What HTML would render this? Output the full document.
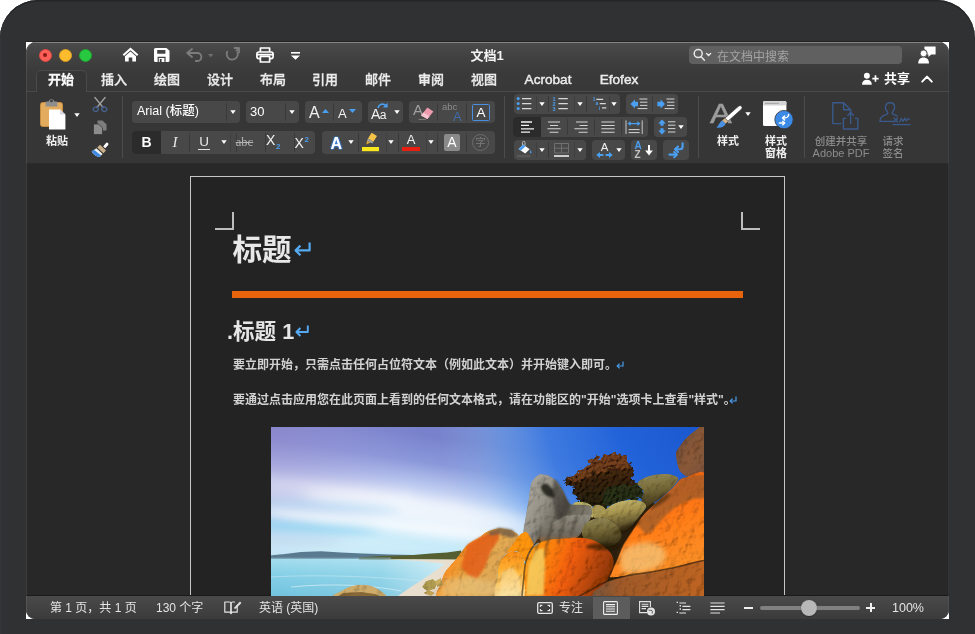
<!DOCTYPE html>
<html lang="zh-CN">
<head>
<meta charset="utf-8">
<title>文档1</title>
<style>
*{box-sizing:border-box;margin:0;padding:0}
html,body{width:975px;height:634px;overflow:hidden;background:#fff}
body{font-family:"Liberation Sans","Noto Sans CJK SC",sans-serif;color:#fff;position:relative}
.abs{position:absolute}
#bezel{position:absolute;left:0;top:0;width:975px;height:700px;background:#303133;border-radius:38px 38px 0 0;box-shadow:inset 0 1.5px 0 #242526,inset 2px 0 1px #343537}
#winbg{position:absolute;left:26px;top:42px;width:923px;height:577px;background:#fff;box-shadow:0 -1px 0 #232324}
#win{will-change:transform;position:absolute;left:26px;top:42px;width:923px;height:577px;border-radius:10px 10px 9px 9px;overflow:hidden;background:#282828}
#win:after{content:"";position:absolute;left:0;top:0;right:0;bottom:0;border-radius:10px 10px 9px 9px;box-shadow:inset 1px 0 0 rgba(255,255,255,.09),inset -1px 0 0 rgba(255,255,255,.06);pointer-events:none}
#titlebar{position:absolute;left:0;top:0;width:923px;height:49px;background:linear-gradient(#4b4b4b 0,#424242 14px,#3a3a3a 30px,#383838 49px)}
#titlebar:before{content:"";position:absolute;left:0;top:0;right:0;height:1px;background:#848484}
#ribbon{position:absolute;left:0;top:49px;width:923px;height:72px;background:#363636;border-top:1px solid #4a4a4a}
#ribbonline{position:absolute;left:0;top:121px;width:923px;height:2px;background:linear-gradient(#2c2c2c,#282828)}
#work{position:absolute;left:0;top:123px;width:923px;height:431px;background:#282828}
#status{position:absolute;left:0;top:553px;width:923px;height:24px;background:linear-gradient(#4a4a4a,#3b3b3b);border-top:1px solid #1a1a1a}
.tl{position:absolute;top:6.5px;width:13px;height:13px;border-radius:50%}
.tab{-webkit-text-stroke:0.3px #ececec;position:absolute;top:28.5px;height:18px;line-height:18px;font-size:13px;font-weight:500;color:#ececec;text-align:center;width:60px;white-space:nowrap}
#acttab{position:absolute;left:10px;top:28px;width:51px;height:22px;background:#363636;border:1px solid #4a4a4a;border-bottom:none;border-radius:5px 5px 0 0}
.grp{position:absolute;background:#484848;border-radius:4px;height:22px}
.dv{position:absolute;top:2px;bottom:2px;width:1px;background:#3a3a3a}
.vsep{position:absolute;top:54px;width:1px;height:62px;background:#4c4c4c}
.lbl{position:absolute;font-size:10.5px;font-weight:500;color:#f0f0f0;text-align:center;white-space:nowrap;line-height:12px}
.st{position:absolute;top:558px;font-size:12px;line-height:16px;color:#e4e4e4;white-space:nowrap}
svg{position:absolute;overflow:visible}
</style>
</head>
<body>
<div id="bezel"></div>
<div id="winbg"></div>
<div id="win">
  <div id="titlebar"></div>
  <div id="ribbon"></div>
  <div id="ribbonline"></div>
  <div id="work"></div>
  <div id="status"></div>
  
  <div class="tl" style="left:12.5px;background:#fc5f57;border:0.5px solid #d94a42"></div>
  <div class="abs" style="left:17px;top:11px;width:4px;height:4px;border-radius:50%;background:#8c1a14"></div>
  <div class="tl" style="left:32.5px;background:#fdbc2e;border:0.5px solid #d99f22"></div>
  <div class="tl" style="left:52.5px;background:#28c840;border:0.5px solid #1fa631"></div>
  <!-- home -->
  <svg style="left:96px;top:5px" width="17" height="15" viewBox="0 0 17 15"><path d="M8.5 0.6 L16.4 7.6 L15 9 L8.5 3.3 L2 9 L0.6 7.6 Z" fill="#fff"/><path d="M3 9.3 L8.5 4.6 L14 9.3 V14.6 H10.3 V10.4 H6.7 V14.6 H3 Z" fill="#fff"/></svg>
  <!-- save -->
  <svg style="left:128px;top:6px" width="16" height="14" viewBox="0 0 16 14"><path d="M1.5 0 H12.5 L15.5 2.8 V12.5 A1.5 1.5 0 0 1 14 14 H1.5 A1.5 1.5 0 0 1 0 12.5 V1.5 A1.5 1.5 0 0 1 1.5 0 Z M3.2 2 V5.8 H11.4 V2 Z M3.6 8.8 V14 H11.6 V8.8 Z" fill="#fff" fill-rule="evenodd"/><rect x="4.8" y="10" width="5.6" height="4" fill="#fff"/><rect x="5.8" y="11" width="1.8" height="3" fill="#3c3c3c"/></svg>
  <!-- undo -->
  <svg style="left:159.5px;top:6px" width="17" height="14" viewBox="0 0 17 14" fill="none" stroke="#7c7c7c" stroke-width="1.8" stroke-linecap="round" stroke-linejoin="round"><path d="M6 1 L1.2 5 L6 9"/><path d="M1.6 5 H11.4 A4 4 0 0 1 11.4 13 H9.8"/></svg>
  <svg style="left:182px;top:11.5px" width="5.4" height="3.2" viewBox="0 0 7 4"><path d="M0 0 H7 L3.5 4 Z" fill="#6e6e6e"/></svg>
  <!-- redo -->
  <svg style="left:199px;top:5px" width="16" height="15" viewBox="0 0 16 15" fill="none" stroke="#7c7c7c" stroke-width="1.8" stroke-linecap="round" stroke-linejoin="round"><path d="M9.6 1 H14 V5.4"/><path d="M13.6 1.6 L11.6 3.6 M12.6 5.4 A5.6 5.6 0 1 1 2.2 4.6"/></svg>
  <!-- print -->
  <svg style="left:230px;top:5px" width="18" height="16" viewBox="0 0 18 16" fill="none" stroke="#fff" stroke-width="1.7" stroke-linejoin="round"><path d="M4.4 5 V1 H13.6 V5"/><rect x="0.9" y="5" width="16.2" height="6.6" rx="2"/><rect x="4.4" y="9.4" width="9.2" height="5.6" fill="#3e3e3e"/><path d="M0.9 7.6 H17.1" stroke-width="1.6"/></svg>
  <!-- customize -->
  <svg style="left:265px;top:10px" width="9" height="8" viewBox="0 0 9 8"><rect x="0" y="0" width="9" height="1.6" fill="#fff"/><path d="M0 3.4 H9 L4.5 7.8 Z" fill="#fff"/></svg>
  <div class="abs" style="left:421px;top:5px;width:80px;text-align:center;font-size:13px;line-height:17px;font-weight:700;color:#f4f4f4">文档1</div>
  <!-- search -->
  <div class="abs" style="left:663px;top:4px;width:213px;height:18px;border-radius:4px;background:#606060"></div>
  <svg style="left:667px;top:6px" width="20" height="14" viewBox="0 0 20 14" fill="none" stroke="#e8e8e8" stroke-width="1.5" stroke-linecap="round"><circle cx="5.2" cy="5.6" r="4"/><path d="M8.2 8.8 L11.4 12.2"/><path d="M13.6 5.6 L15.6 7.6 L17.6 5.6" stroke-width="1.4"/></svg>
  <div class="abs" style="left:691px;top:6.5px;font-size:12px;line-height:16px;color:#a4a4a4;white-space:nowrap">在文档中搜索</div>
  <!-- comments person -->
  <svg style="left:892px;top:4px" width="18" height="18" viewBox="0 0 18 18"><path d="M6.4 0.4 H17.6 V8.4 H13.2 L10.4 11 V8.4 H9.2 A4 4 0 0 0 6.4 3.2 Z" fill="#fff"/><circle cx="5.6" cy="7.4" r="3.4" fill="#fff" stroke="#3e3e3e" stroke-width="0.8"/><path d="M0.2 17.6 C0.2 13.6 2.4 11.6 5.6 11.6 C8.8 11.6 11 13.6 11 17.6 Z" fill="#fff"/></svg>
  <!-- tabs -->
  <div id="acttab"></div>
  <div class="tab" style="left:5px;font-weight:700;color:#fff">开始</div>
  <div class="tab" style="left:58px">插入</div>
  <div class="tab" style="left:111px">绘图</div>
  <div class="tab" style="left:164px">设计</div>
  <div class="tab" style="left:217px">布局</div>
  <div class="tab" style="left:269px">引用</div>
  <div class="tab" style="left:322px">邮件</div>
  <div class="tab" style="left:375px">审阅</div>
  <div class="tab" style="left:428px">视图</div>
  <div class="tab" style="left:492px;font-size:13.6px;-webkit-text-stroke:0.45px #ececec">Acrobat</div>
  <div class="tab" style="left:563px;font-size:13.6px;-webkit-text-stroke:0.45px #ececec">Efofex</div>
  <!-- share -->
  <svg style="left:836px;top:30px" width="17.5" height="13.5" viewBox="0 0 20 15"><circle cx="5.6" cy="4" r="3.4" fill="#fff"/><path d="M0 14.4 C0 10.4 2.2 8.6 5.6 8.6 C9 8.6 11.2 10.4 11.2 14.4 Z" fill="#fff"/><path d="M15.4 3.6 V11 M11.8 7.3 H19" stroke="#fff" stroke-width="1.9"/></svg>
  <div class="abs" style="left:858px;top:28px;font-size:13px;line-height:18px;font-weight:700;color:#fff;white-space:nowrap">共享</div>
  <svg style="left:895px;top:33px" width="12" height="8" viewBox="0 0 12 8" fill="none" stroke="#fff" stroke-width="2" stroke-linecap="round" stroke-linejoin="round"><path d="M1.2 6.6 L6 1.6 L10.8 6.6"/></svg>

  
  <!-- clipboard -->
  <svg style="left:14px;top:56px" width="26" height="32" viewBox="0 0 26 32"><rect x="0.5" y="4.5" width="22" height="24" rx="2.2" fill="#e2ab5e" stroke="#c58d3f" stroke-width="1"/><path d="M5.6 8.4 V4.6 Q5.6 3.6 6.6 3.6 H8.6 A3 3 0 0 1 14.4 3.6 H16.4 Q17.4 3.6 17.4 4.6 V8.4 Z" fill="#8e8e8e"/><circle cx="11.5" cy="3" r="1.3" fill="#3a3a3a"/><path d="M9 11.5 H20 L25.4 16.6 V31.4 H9 Z" fill="#fff"/><path d="M20 11.5 V16.6 H25.4 Z" fill="#d8d8e4"/></svg>
  <svg style="left:47.5px;top:70.5px" width="6" height="5" viewBox="0 0 6 5"><path d="M0.3 0.3 H5.7 L3 4 Z" fill="#fff"/></svg>
  <div class="lbl" style="left:11px;top:93px;width:40px;font-size:11px;font-weight:700">粘贴</div>
  <!-- scissors -->
  <svg style="left:66px;top:55px" width="16" height="16" viewBox="0 0 16 16" fill="none"><path d="M3 0.6 L11 10.4 M13 0.6 L5 10.4" stroke="#a4a4a4" stroke-width="1.5" stroke-linecap="round"/><ellipse cx="3.8" cy="12.2" rx="2.6" ry="2.2" stroke="#46628e" stroke-width="1.3" transform="rotate(-30 3.8 12.2)"/><ellipse cx="12.2" cy="12.2" rx="2.6" ry="2.2" stroke="#46628e" stroke-width="1.3" transform="rotate(30 12.2 12.2)"/></svg>
  <!-- copy -->
  <svg style="left:67px;top:78px" width="14" height="15" viewBox="0 0 14 15"><path d="M4.5 0.5 H9.5 L13.5 4.4 V10.5 H4.5 Z" fill="#7e7e7e"/><path d="M0.5 4 H5.6 L9.5 7.8 V14.5 H0.5 Z" fill="#8c8c8c" stroke="#363636" stroke-width="0.8"/></svg>
  <!-- format painter -->
  <svg style="left:65px;top:100px" width="18" height="16" viewBox="0 0 18 16"><path d="M12.2 4.4 L15 1 A1.5 1.5 0 0 1 17.2 3 L14.2 6.2 Z" fill="#fff"/><path d="M6.2 5.4 L9 2.8 L15 8.6 L12.4 11.2 Z" fill="#c9b08a"/><path d="M5.4 6.2 L11.6 12 L8.8 14.8 C6 15.6 2 12 0.6 9.6 Z" fill="#f2f2f2"/><path d="M3 7.8 L10.2 13.6 L8.8 14.8 C6 15.6 2 12 0.6 9.6 Z" fill="#3f8ae0"/></svg>
  <div class="vsep" style="left:96px"></div>
  <!-- font name / size -->
  <div class="grp" style="left:106px;top:59px;width:108px"><div class="dv" style="left:94px"></div></div>
  <div class="abs" style="left:111px;top:61px;font-size:12.5px;line-height:17px;font-weight:500;color:#fff;white-space:nowrap">Arial (标题)</div>
  <svg style="left:204px;top:68px" width="6" height="5" viewBox="0 0 6 5"><path d="M0.3 0.3 H5.7 L3 4 Z" fill="#fff"/></svg>
  <div class="grp" style="left:220px;top:59px;width:53px"><div class="dv" style="left:39px"></div></div>
  <div class="abs" style="left:224px;top:61px;font-size:13px;line-height:17px;font-weight:500;color:#fff">30</div>
  <svg style="left:263px;top:68px" width="6" height="5" viewBox="0 0 6 5"><path d="M0.3 0.3 H5.7 L3 4 Z" fill="#fff"/></svg>
  <!-- grow/shrink -->
  <div class="grp" style="left:279px;top:59px;width:57px"><div class="dv" style="left:28px"></div></div>
  <div class="abs" style="left:283px;top:60px;font-size:16px;line-height:22px;color:#f2f2f2">A</div>
  <svg style="left:296px;top:66.5px" width="7" height="4.4" viewBox="0 0 8 5"><path d="M0 4.6 H8 L4 0 Z" fill="#4a9ff0"/></svg>
  <div class="abs" style="left:312px;top:61px;font-size:13px;line-height:22px;color:#f2f2f2">A</div>
  <svg style="left:322.5px;top:67px" width="7" height="4.4" viewBox="0 0 8 5"><path d="M0 0 H8 L4 4.6 Z" fill="#4a9ff0"/></svg>
  <!-- change case -->
  <div class="grp" style="left:342px;top:59px;width:35px"></div>
  <div class="abs" style="left:345px;top:62px;font-size:14px;line-height:20px;color:#f2f2f2;letter-spacing:-0.6px">A<span style="font-size:12px">a</span></div>
  <svg style="left:351px;top:60px" width="11" height="7" viewBox="0 0 11 7" fill="none"><path d="M1 6 C2 2 6 1 9 3.6" stroke="#4a9ff0" stroke-width="1.6"/><path d="M10.6 0.8 V5.6 H5.8 Z" fill="#4a9ff0"/></svg>
  <svg style="left:368px;top:68px" width="6" height="5" viewBox="0 0 6 5"><path d="M0.3 0.3 H5.7 L3 4 Z" fill="#fff"/></svg>
  <!-- clear / phonetic / border -->
  <div class="grp" style="left:383px;top:59px;width:86px"><div class="dv" style="left:28px"></div><div class="dv" style="left:57px"></div></div>
  <div class="abs" style="left:387px;top:59px;font-size:15px;line-height:18px;color:#a0a0a0">A</div>
  <svg style="left:392px;top:65px" width="16" height="13" viewBox="0 0 16 13"><path d="M9.4 0.6 L15.4 4.4 L9.4 12 L3 8.4 Z" fill="#ee9aae"/><path d="M3 8.4 L5.4 5.6 L11.6 9.2 L9.4 12 Z" fill="#f7c5d0"/><path d="M0.5 12.4 H8" stroke="#888" stroke-width="0.8"/></svg>
  <div class="abs" style="left:416px;top:59px;font-size:9.5px;line-height:11px;color:#8c8c8c">abc</div>
  <div class="abs" style="left:427px;top:68px;font-size:13px;line-height:13px;color:#3e6ca8">A</div>
  <div class="abs" style="left:446px;top:62px;width:18px;height:17px;border:1.3px solid #4a90e2;border-radius:1.5px;font-size:13.5px;line-height:15px;text-align:center;color:#fff">A</div>
  <!-- row2: B I U abc X2 X2 -->
  <div class="grp" style="left:106px;top:89px;width:183px;height:23px"><div class="abs" style="left:0;top:0;width:29px;height:23px;background:#2b2b2b;border-radius:4px 0 0 4px"></div><div class="dv" style="left:57px"></div><div class="dv" style="left:98px;background:#3f3f3f"></div><div class="dv" style="left:104px"></div><div class="dv" style="left:133px"></div><div class="dv" style="left:162px"></div></div>
  <div class="abs" style="left:106px;top:91px;width:29px;text-align:center;font-size:14px;line-height:19px;font-weight:700;color:#fff">B</div>
  <div class="abs" style="left:135px;top:91px;width:28px;text-align:center;font-size:15px;line-height:19px;font-style:italic;color:#e8e8e8;font-family:'Liberation Serif',serif">I</div>
  <div class="abs" style="left:164px;top:90px;width:28px;text-align:center;font-size:13.5px;line-height:19px;color:#e8e8e8">U</div>
  <div class="abs" style="left:172px;top:107px;width:12px;height:1.2px;background:#e0e0e0"></div>
  <svg style="left:195px;top:98px" width="6" height="5" viewBox="0 0 6 5"><path d="M0.3 0.3 H5.7 L3 4 Z" fill="#fff"/></svg>
  <div class="abs" style="left:204px;top:91px;width:29px;text-align:center;font-size:12.5px;line-height:19px;color:#b4b4b4;text-decoration:line-through;font-family:'Liberation Serif',serif">abc</div>
  <div class="abs" style="left:233px;top:89px;width:29px;text-align:center;font-size:14px;line-height:19px;color:#f2f2f2;letter-spacing:0.5px">X<span style="font-size:8px;color:#4a9ff0;position:relative;top:4px;font-weight:700">2</span></div>
  <div class="abs" style="left:262px;top:92px;width:28px;text-align:center;font-size:14px;line-height:19px;color:#f2f2f2;letter-spacing:0.5px">X<span style="font-size:8px;color:#4a9ff0;position:relative;top:-6px;font-weight:700">2</span></div>
  <!-- row2: effects / highlight / color / shading / enclosed -->
  <div class="grp" style="left:296px;top:89px;width:173px;height:23px"><div class="dv" style="left:36px"></div><div class="dv" style="left:64px;background:#3f3f3f"></div><div class="dv" style="left:76px"></div><div class="dv" style="left:104px;background:#3f3f3f"></div><div class="dv" style="left:115px"></div><div class="dv" style="left:144px"></div></div>
  <div class="abs" style="left:304.5px;top:90.5px;font-size:16px;line-height:21px;font-weight:700;color:#fff;text-shadow:0 0 2px #3a8fff,0 0 2px #3a8fff,0 0 1px #3a8fff">A</div>
  <svg style="left:322px;top:98px" width="6" height="5" viewBox="0 0 6 5"><path d="M0.3 0.3 H5.7 L3 4 Z" fill="#fff"/></svg>
  <svg style="left:336px;top:90px" width="17" height="20" viewBox="0 0 17 20"><path d="M9.6 0.8 L15 4 L11.4 9.8 L6 6.6 Z" fill="#f5c24a"/><path d="M6 6.6 L11.4 9.8 L10.2 11.6 L5 8.6 Z" fill="#a0a0a0"/><path d="M5 8.6 L8.4 10.6 L4.4 12.4 Z" fill="#d9a83a"/><rect x="0" y="15" width="17" height="4.2" fill="#f8e71c"/></svg>
  <svg style="left:362px;top:98px" width="6" height="5" viewBox="0 0 6 5"><path d="M0.3 0.3 H5.7 L3 4 Z" fill="#fff"/></svg>
  <div class="abs" style="left:376.5px;top:89px;width:17px;text-align:center;font-size:13px;line-height:18px;color:#f2f2f2">A</div>
  <div class="abs" style="left:376px;top:105px;width:18px;height:4.2px;background:#e81f10"></div>
  <svg style="left:402px;top:98px" width="6" height="5" viewBox="0 0 6 5"><path d="M0.3 0.3 H5.7 L3 4 Z" fill="#fff"/></svg>
  <div class="abs" style="left:418px;top:92px;width:16px;height:17px;background:#8a8a8a;border-radius:2px;font-size:14px;line-height:17px;text-align:center;color:#fff">A</div>
  <div class="abs" style="left:446px;top:92px;width:17px;height:17px;border:1px solid #6c6c6c;border-radius:50%;font-size:10.5px;line-height:15px;text-align:center;color:#7c7c7c">字</div>
  <div class="vsep" style="left:478px"></div>
  
  <!-- row1 lists -->
  <div class="grp" style="left:488px;top:52px;width:106px;height:20px"><div class="dv" style="left:22px;background:#3f3f3f"></div><div class="dv" style="left:34px"></div><div class="dv" style="left:60px;background:#3f3f3f"></div><div class="dv" style="left:72px"></div><div class="dv" style="left:95px;background:#3f3f3f"></div></div>
  <svg style="left:490px;top:54px" width="18" height="16" viewBox="0 0 18 16"><circle cx="2.2" cy="2.6" r="1.5" fill="#4a9ff0"/><circle cx="2.2" cy="7.6" r="1.5" fill="#4a9ff0"/><circle cx="2.2" cy="12.6" r="1.5" fill="#4a9ff0"/><path d="M6 2.6 H15.4 M6 7.6 H15.4 M6 12.6 H15.4" stroke="#d8d8d8" stroke-width="1.3"/></svg>
  <svg style="left:513px;top:60px" width="6" height="5" viewBox="0 0 6 5"><path d="M0.3 0.3 H5.7 L3 4 Z" fill="#fff"/></svg>
  <svg style="left:526px;top:54px" width="18" height="16" viewBox="0 0 18 16"><path d="M6.4 2.6 H15.8 M6.4 7.6 H15.8 M6.4 12.6 H15.8" stroke="#d8d8d8" stroke-width="1.3"/><text x="0.4" y="4.6" font-size="5.5" font-weight="700" fill="#4a9ff0" font-family="Liberation Sans,sans-serif">1</text><text x="0.4" y="9.8" font-size="5.5" font-weight="700" fill="#4a9ff0" font-family="Liberation Sans,sans-serif">2</text><text x="0.4" y="15" font-size="5.5" font-weight="700" fill="#4a9ff0" font-family="Liberation Sans,sans-serif">3</text></svg>
  <svg style="left:551px;top:60px" width="6" height="5" viewBox="0 0 6 5"><path d="M0.3 0.3 H5.7 L3 4 Z" fill="#fff"/></svg>
  <svg style="left:566px;top:55px" width="15.5" height="14" viewBox="0 0 18 16"><path d="M5 2.6 H13 M9 7.6 H16 M11.6 12.6 H16.6" stroke="#d8d8d8" stroke-width="1.4"/><text x="0.8" y="4.6" font-size="5.5" font-weight="700" fill="#4a9ff0" font-family="Liberation Sans,sans-serif">1</text><text x="4.2" y="9.6" font-size="5.5" font-weight="700" fill="#4a9ff0" font-family="Liberation Sans,sans-serif">a</text><text x="8" y="15" font-size="5.5" font-weight="700" fill="#4a9ff0" font-family="Liberation Sans,sans-serif">i</text></svg>
  <svg style="left:585px;top:60px" width="6" height="5" viewBox="0 0 6 5"><path d="M0.3 0.3 H5.7 L3 4 Z" fill="#fff"/></svg>
  <!-- indent -->
  <div class="grp" style="left:600px;top:52px;width:52px;height:20px"><div class="dv" style="left:26px"></div></div>
  <svg style="left:604px;top:56px" width="19" height="12" viewBox="0 0 19 12"><path d="M0.4 6 L5 1.4 V3.8 H8 V8.2 H5 V10.6 Z" fill="#4a9ff0"/><path d="M9.4 1 H17.4 M10 4.2 H17.4 M10 7.4 H17.4 M7.6 10.6 H17.4" stroke="#d4d4d4" stroke-width="1"/></svg>
  <svg style="left:631px;top:56px" width="19" height="12" viewBox="0 0 19 12"><path d="M8 6 L3.6 1.4 V3.8 H0.4 V8.2 H3.6 V10.6 Z" fill="#4a9ff0"/><path d="M9.4 1 H17.4 M10 4.2 H17.4 M10 7.4 H17.4 M7.6 10.6 H17.4" stroke="#d4d4d4" stroke-width="1"/></svg>
  <!-- row2 align -->
  <div class="grp" style="left:487px;top:75px;width:135px;height:20px"><div class="abs" style="left:0;top:0;width:28px;height:20px;background:#2b2b2b;border-radius:4px 0 0 4px"></div><div class="dv" style="left:54px"></div><div class="dv" style="left:81px"></div><div class="dv" style="left:108px"></div></div>
  <svg style="left:495px;top:79px" width="14" height="12" viewBox="0 0 14 12"><path d="M0 1 H11 M0 4.4 H8 M0 7.8 H13 M0 11.2 H9" stroke="#f4f4f4" stroke-width="1.3"/></svg>
  <svg style="left:521px;top:79px" width="14" height="12" viewBox="0 0 14 12"><path d="M1 1 H13 M3 4.4 H11 M0.4 7.8 H13.6 M2.6 11.2 H11.4" stroke="#d4d4d4" stroke-width="1.05"/></svg>
  <svg style="left:548px;top:79px" width="14" height="12" viewBox="0 0 14 12"><path d="M2 1 H13.6 M5.6 4.4 H13.6 M0.4 7.8 H13.6 M4.6 11.2 H13.6" stroke="#d4d4d4" stroke-width="1.05"/></svg>
  <svg style="left:575px;top:79px" width="14" height="12" viewBox="0 0 14 12"><path d="M0.4 1 H13.6 M0.4 4.4 H13.6 M0.4 7.8 H13.6 M0.4 11.2 H13.6" stroke="#d4d4d4" stroke-width="1.05"/></svg>
  <svg style="left:598px;top:77px" width="20" height="16" viewBox="0 0 20 16"><path d="M2 1.4 V15 M18.2 1.4 V15" stroke="#c8c8c8" stroke-width="1"/><path d="M4.6 10.6 H15.6 M4.6 13.6 H15.6" stroke="#d4d4d4" stroke-width="1"/><path d="M3.4 4.6 L6.6 2.2 V7 Z M16.6 4.6 L13.4 2.2 V7 Z" fill="#4a9ff0"/><path d="M6 4.6 H14" stroke="#4a9ff0" stroke-width="1.3"/></svg>
  <!-- line spacing -->
  <div class="grp" style="left:628px;top:75px;width:33px;height:20px"></div>
  <svg style="left:632px;top:77px" width="20" height="16" viewBox="0 0 20 16"><path d="M4 0.6 L7.8 4.6 H5.6 V6.8 H2.4 V4.6 H0.2 Z M4 15.4 L7.8 11.4 H5.6 V9.2 H2.4 V11.4 H0.2 Z" fill="#4a9ff0"/><path d="M10 2.8 H17.4 M10 6.2 H17.4 M10 9.6 H17.4 M10 13 H17.4" stroke="#d4d4d4" stroke-width="1"/></svg>
  <svg style="left:652px;top:83px" width="6" height="5" viewBox="0 0 6 5"><path d="M0.3 0.3 H5.7 L3 4 Z" fill="#fff"/></svg>
  <!-- row3 -->
  <div class="grp" style="left:488px;top:98px;width:72px;height:20px"><div class="dv" style="left:22px;background:#3f3f3f"></div><div class="dv" style="left:34px"></div><div class="dv" style="left:60px;background:#3f3f3f"></div></div>
  <svg style="left:491px;top:99px" width="16" height="17" viewBox="0 0 16 17"><path d="M6.2 3.4 L12.6 8.2 L8.2 12.6 L1.6 8 Z" fill="#fff"/><path d="M1.6 8 L6.2 3.4 L8.6 5.2 L4 9.6 Z" fill="#4a9ff0"/><path d="M5.4 4 V1.6 A1.3 1.3 0 0 1 8 1.6 V4.6" fill="none" stroke="#bdbdbd" stroke-width="1"/><path d="M13.4 9 C14.6 10.6 14.8 11.6 14 12.2 C13 12.6 12.4 11.4 13.4 9 Z" fill="#4a9ff0"/><rect x="0" y="13.8" width="13.6" height="2.6" fill="#585858"/></svg>
  <svg style="left:513px;top:106px" width="6" height="5" viewBox="0 0 6 5"><path d="M0.3 0.3 H5.7 L3 4 Z" fill="#fff"/></svg>
  <svg style="left:528px;top:101px" width="15" height="14" viewBox="0 0 15 14"><path d="M0.5 0.5 H14.5 V10 H0.5 Z M7.5 0.5 V10 M0.5 5.2 H14.5" fill="none" stroke="#707070" stroke-width="1"/><path d="M0 13 H15" stroke="#f0f0f0" stroke-width="1.6"/></svg>
  <svg style="left:551px;top:106px" width="6" height="5" viewBox="0 0 6 5"><path d="M0.3 0.3 H5.7 L3 4 Z" fill="#fff"/></svg>
  <div class="grp" style="left:566px;top:98px;width:33px;height:20px"></div>
  <div class="abs" style="left:570px;top:99px;width:17px;text-align:center;font-size:11.5px;line-height:13px;color:#f2f2f2">A</div>
  <svg style="left:570px;top:110px" width="17" height="6" viewBox="0 0 17 6"><path d="M0.2 3 L4 0 V6 Z M16.8 3 L13 0 V6 Z" fill="#4a9ff0"/><path d="M3.4 3 H7.4 M9.6 3 H13.6" stroke="#4a9ff0" stroke-width="2"/></svg>
  <svg style="left:590px;top:106px" width="6" height="5" viewBox="0 0 6 5"><path d="M0.3 0.3 H5.7 L3 4 Z" fill="#fff"/></svg>
  <div class="grp" style="left:605px;top:98px;width:26px;height:20px"></div>
  <div class="abs" style="left:608.5px;top:99px;font-size:10px;line-height:10px;font-weight:700;color:#4a9ff0">A</div>
  <div class="abs" style="left:608.5px;top:107.5px;font-size:10px;line-height:10px;font-weight:700;color:#c4c4c4">Z</div>
  <svg style="left:618.5px;top:103px" width="8" height="11" viewBox="0 0 8 11"><path d="M4 0 V7" stroke="#fff" stroke-width="2"/><path d="M0.2 5.6 H7.8 L4 10.4 Z" fill="#fff"/></svg>
  <div class="grp" style="left:637px;top:98px;width:26px;height:20px"></div>
  <svg style="left:642px;top:100px" width="18" height="16" viewBox="0 0 18 16" fill="none" stroke="#4a9ff0" stroke-width="2.1" stroke-linecap="round" stroke-linejoin="round"><path d="M14.6 1.2 V4.4 Q14.6 7.2 11.8 7.2 H8"/><path d="M10 4.4 L7 7.2 L10 10"/><path d="M1.4 12.6 H8"/><path d="M6.2 10 L9 12.6 L6.2 15.2"/></svg>
  <div class="vsep" style="left:672px"></div>
  
  <!-- styles -->
  <div class="abs" style="left:684px;top:57px;font-size:28.5px;line-height:28px;color:#9c9c9c;-webkit-text-stroke:0.6px #9c9c9c;transform:scaleX(1.14);transform-origin:0 0">A</div>
  <svg style="left:690px;top:63px" width="27" height="24" viewBox="0 0 30 26"><path d="M27.6 0.6 C29.4 1.4 29.4 3 28.2 4.4 L13.4 17.6 L9.8 14.4 L24.6 1.4 C25.6 0.4 26.6 0.2 27.6 0.6 Z" fill="#fff" stroke="#363636" stroke-width="0.8"/><path d="M9.8 14.4 L13.4 17.6 L10.6 20.4 L6.8 17 Z" fill="#d2b48c"/><path d="M6.8 17 L10.6 20.4 C9.6 23.6 5 25.6 0.6 24.6 C3 23 3.4 19.4 6.8 17 Z" fill="#4a90e2"/></svg>
  <svg style="left:719px;top:70px" width="6" height="5" viewBox="0 0 6 5"><path d="M0.3 0.3 H5.7 L3 4 Z" fill="#fff"/></svg>
  <div class="lbl" style="left:682px;top:93px;width:40px;font-size:11px;font-weight:700">样式</div>
  <svg style="left:737px;top:59px" width="31" height="30" viewBox="0 0 31 30"><rect x="0" y="0" width="23.4" height="25" rx="1.6" fill="#fff"/><rect x="0" y="0" width="23.4" height="4.6" rx="1.6" fill="#d4d4d4"/><rect x="2" y="1.8" width="14" height="1.2" fill="#aaa"/><circle cx="21" cy="18.6" r="9.2" fill="#3b8ae6" stroke="#363636" stroke-width="0.8"/><g fill="none" stroke="#fff" stroke-width="1.5" stroke-linecap="round" stroke-linejoin="round"><path d="M25.6 13.6 C25.6 16.4 24 17 20 17"/><path d="M21.6 15 L19.6 17 L21.6 19"/><path d="M16.4 22 H21.4"/><path d="M19.8 20.2 L21.6 22 L19.8 23.8"/></g></svg>
  <div class="lbl" style="left:730px;top:93px;width:40px;font-size:11px;font-weight:700">样式<br>窗格</div>
  <div class="vsep" style="left:778px"></div>
  <svg style="left:806px;top:60px" width="27" height="28" viewBox="0 0 27 28" fill="none" stroke="#3a5a8c" stroke-width="1.4" stroke-linejoin="round"><path d="M9.4 21.6 H0.8 V0.8 H11.6 L18.6 7.8 V11"/><path d="M11.6 0.8 V7.8 H18.6"/><path d="M14.4 16.4 H11.4 V27 H25.8 V16.4 H22.8"/><path d="M18.6 22 V10.8 M15.4 13.8 L18.6 10.6 L21.8 13.8"/></svg>
  <div class="lbl" style="left:780px;top:93px;width:70px;font-size:10.5px;color:#8c8c8c;font-weight:500">创建并共享<br><span style="font-size:11px;letter-spacing:0">Adobe PDF</span></div>
  <svg style="left:853px;top:60px" width="32" height="28" viewBox="0 0 32 28" fill="none" stroke="#3a5a8c" stroke-width="1.4" stroke-linecap="round" stroke-linejoin="round"><path d="M14.6 19.4 H1 C1 14.8 4.2 13.4 7.6 12.4 C9 12 9 10.6 8.2 9.6 C6.8 8 6.4 6.6 6.4 5.2 C6.4 2.4 8.4 0.8 11 0.8 C13.6 0.8 15.6 2.4 15.6 5.2 C15.6 6.6 15.2 8 13.8 9.6 C13 10.6 13 12 14.4 12.4 C15.8 12.8 17 13.2 18 13.8"/><path d="M15 16 L18.6 20 M18.6 16 L15 20" stroke-width="1.2"/><path d="M20.6 20 L22.4 16.4 L24 19.6 L25.8 16 L27.2 19 L29 16.4 L30.4 17.6" stroke-width="1.2"/><path d="M14 22.6 H31" stroke-width="1.1"/></svg>
  <div class="lbl" style="left:847px;top:93px;width:40px;font-size:10.5px;color:#8c8c8c;font-weight:500">请求<br>签名</div>



  
  <!-- page -->
  <div class="abs" style="left:164px;top:134px;width:595px;height:419px;border:1px solid #c6c6c6;border-bottom:none;background:#232323"></div>
  <div class="abs" style="left:189px;top:186px;width:18.5px;height:2px;background:#bdbdbd"></div>
  <div class="abs" style="left:205.5px;top:170px;width:2px;height:18px;background:#bdbdbd"></div>
  <div class="abs" style="left:715px;top:186px;width:18.5px;height:2px;background:#bdbdbd"></div>
  <div class="abs" style="left:715px;top:170px;width:2px;height:18px;background:#bdbdbd"></div>
  <div class="abs" style="left:206.5px;top:187px;font-size:29.6px;line-height:42px;font-weight:700;color:#e8e8e8;white-space:nowrap">标题</div>
  <svg style="left:267.5px;top:200px" width="17" height="14" viewBox="0 0 17 14" fill="none" stroke="#56aaf2" stroke-width="2.2" stroke-linejoin="round"><path d="M15.6 0.4 V8.4 H2"/><path d="M6.4 3.6 L1.6 8.4 L6.4 13.2"/></svg>
  <div class="abs" style="left:206px;top:249px;width:511px;height:7px;background:#e8640c"></div>
  <div class="abs" style="left:201px;top:275px;font-size:21.6px;line-height:30px;font-weight:700;color:#e6e6e6;white-space:nowrap"><span style="letter-spacing:0">.</span>标题 1</div>
  <svg style="left:269px;top:283px" width="14" height="12" viewBox="0 0 14 12" fill="none" stroke="#56aaf2" stroke-width="1.9" stroke-linejoin="round"><path d="M12.8 0.4 V7 H1.6"/><path d="M5.4 3 L1.4 7 L5.4 11"/></svg>
  <div class="abs" style="left:207px;top:313.5px;font-size:12px;line-height:18px;font-weight:700;color:#d2d2d2;white-space:nowrap">要立即开始，只需点击任何占位符文本（例如此文本）并开始键入即可。</div>
  <svg style="left:590px;top:318.5px" width="8" height="8" viewBox="0 0 8 8" fill="none" stroke="#4a9ff0" stroke-width="1.2"><path d="M7 0.4 V5 H1.4"/><path d="M3.6 2.6 L1.2 5 L3.6 7.4"/></svg>
  <div class="abs" style="left:207px;top:349px;font-size:12px;line-height:18px;font-weight:700;color:#d2d2d2;white-space:nowrap">要通过点击应用您在此页面上看到的任何文本格式，请在功能区的"开始"选项卡上查看"样式"。</div>
  <svg style="left:703px;top:354px" width="8" height="8" viewBox="0 0 8 8" fill="none" stroke="#4a9ff0" stroke-width="1.2"><path d="M7 0.4 V5 H1.4"/><path d="M3.6 2.6 L1.2 5 L3.6 7.4"/></svg>
  
  <!--PHOTO_START-->
<svg id="photo" style="left:245px;top:385px;overflow:hidden" width="433" height="169" viewBox="0 0 433 169">
<defs>
<linearGradient id="sky" gradientUnits="userSpaceOnUse" x1="100" y1="0" x2="80" y2="132"><stop offset="0" stop-color="#7882cc"/><stop offset=".2" stop-color="#8a98da"/><stop offset=".36" stop-color="#b6c4ee"/><stop offset=".5" stop-color="#dae4f8"/><stop offset=".66" stop-color="#d8ebfa"/><stop offset=".8" stop-color="#b2e3f7"/><stop offset="1" stop-color="#c2e9f6"/></linearGradient>
<radialGradient id="skyR" cx="460" cy="-30" r="340" gradientUnits="userSpaceOnUse"><stop offset="0" stop-color="#1650c8"/><stop offset=".35" stop-color="#1f62da" stop-opacity=".96"/><stop offset=".55" stop-color="#3478e2" stop-opacity=".86"/><stop offset=".68" stop-color="#5a9cec" stop-opacity=".55"/><stop offset=".77" stop-color="#7ab8f2" stop-opacity=".22"/><stop offset=".87" stop-color="#8cc4f4" stop-opacity="0"/></radialGradient>
<radialGradient id="skyL" cx="0" cy="0" r="150" gradientUnits="userSpaceOnUse"><stop offset="0" stop-color="#8e84c8" stop-opacity=".7"/><stop offset="1" stop-color="#a098d8" stop-opacity="0"/></radialGradient>
<linearGradient id="sea" x1="0" y1="0" x2="0" y2="1"><stop offset="0" stop-color="#a8deef"/><stop offset=".4" stop-color="#86d0e7"/><stop offset="1" stop-color="#70c2dd"/></linearGradient>
<linearGradient id="seaW" x1="0" y1="0" x2="1" y2="0"><stop offset="0" stop-color="#fff" stop-opacity="0"/><stop offset=".55" stop-color="#fff" stop-opacity=".12"/><stop offset="1" stop-color="#fff" stop-opacity=".7"/></linearGradient>
<linearGradient id="gFar" x1="0" y1="0.1" x2="1" y2="0.7"><stop offset="0" stop-color="#e0681a"/><stop offset=".3" stop-color="#ea8820"/><stop offset=".55" stop-color="#dca24a"/><stop offset="1" stop-color="#c89a58"/></linearGradient>
<linearGradient id="gMain" x1="0" y1="0" x2="1" y2="0.25"><stop offset="0" stop-color="#f8c038"/><stop offset=".22" stop-color="#f28a0e"/><stop offset=".6" stop-color="#e85a0a"/><stop offset="1" stop-color="#8e3606"/></linearGradient>
<linearGradient id="gNarrow" x1="0" y1="0" x2="0" y2="1"><stop offset="0" stop-color="#f08614"/><stop offset=".45" stop-color="#f4ac34"/><stop offset="1" stop-color="#f0d898"/></linearGradient>
<linearGradient id="gBig" x1="0" y1="0" x2="0.35" y2="1"><stop offset="0" stop-color="#c85a18"/><stop offset=".3" stop-color="#ee6410"/><stop offset=".7" stop-color="#f47a18"/><stop offset="1" stop-color="#ee8622"/></linearGradient>
<linearGradient id="gBot" x1="0" y1="0" x2="1" y2="0"><stop offset="0" stop-color="#5e4e42"/><stop offset=".3" stop-color="#965426"/><stop offset="1" stop-color="#b8601e"/></linearGradient>
<linearGradient id="gSpire" x1="0" y1="0" x2="1" y2="0.5"><stop offset="0" stop-color="#aaa69c"/><stop offset=".4" stop-color="#8e8a80"/><stop offset=".7" stop-color="#5e5a50"/><stop offset="1" stop-color="#7a766a"/></linearGradient>
<linearGradient id="gSlab" x1="0" y1="0" x2="0" y2="1"><stop offset="0" stop-color="#8a867a"/><stop offset=".7" stop-color="#6a645a"/><stop offset="1" stop-color="#8a5a28"/></linearGradient>
<linearGradient id="gTopR" x1="0" y1="0" x2="1" y2="1"><stop offset="0" stop-color="#5e4434"/><stop offset=".5" stop-color="#845434"/><stop offset="1" stop-color="#74503a"/></linearGradient>
<linearGradient id="gY" x1="0" y1="0" x2="0.3" y2="1"><stop offset="0" stop-color="#c8b870"/><stop offset=".5" stop-color="#9a8a48"/><stop offset="1" stop-color="#463c20"/></linearGradient>
<linearGradient id="gO" x1="0" y1="0" x2="0.2" y2="1"><stop offset="0" stop-color="#8e8656"/><stop offset=".45" stop-color="#746838"/><stop offset="1" stop-color="#3c3216"/></linearGradient>
<linearGradient id="gTree" x1="0" y1="0" x2="0" y2="1"><stop offset="0" stop-color="#5a3016"/><stop offset=".5" stop-color="#36220e"/><stop offset="1" stop-color="#24200e"/></linearGradient>
<filter id="b1" x="-20%" y="-20%" width="140%" height="140%"><feGaussianBlur stdDeviation="1.2"/></filter>
<filter id="b2" x="-20%" y="-20%" width="140%" height="140%"><feGaussianBlur stdDeviation="2.5"/></filter>
<filter id="b3" x="-30%" y="-60%" width="160%" height="220%"><feGaussianBlur stdDeviation="4"/></filter>
<filter id="b6" x="-30%" y="-80%" width="160%" height="260%"><feGaussianBlur stdDeviation="7"/></filter>
<filter id="soft" x="-5%" y="-5%" width="110%" height="110%"><feGaussianBlur stdDeviation="0.5"/></filter>
<filter id="rock" x="-2%" y="-2%" width="104%" height="104%"><feTurbulence type="fractalNoise" baseFrequency="0.11" numOctaves="4" seed="3" result="n"/><feDiffuseLighting in="n" lighting-color="#fff" surfaceScale="2.2" diffuseConstant="1.25" result="l"><feDistantLight azimuth="215" elevation="52"/></feDiffuseLighting><feComposite in="l" in2="SourceGraphic" operator="arithmetic" k1="1" k2="0" k3="0.12" k4="0" result="m"/><feComposite in="m" in2="SourceGraphic" operator="in"/></filter>
<filter id="leaf" x="-10%" y="-10%" width="120%" height="120%"><feTurbulence type="fractalNoise" baseFrequency="0.25" numOctaves="3" seed="11" result="n"/><feDisplacementMap in="SourceGraphic" in2="n" scale="9" xChannelSelector="R" yChannelSelector="G" result="d"/><feTurbulence type="fractalNoise" baseFrequency="0.3" numOctaves="2" seed="5" result="n2"/><feDiffuseLighting in="n2" lighting-color="#fff" surfaceScale="3" diffuseConstant="1.2" result="l"><feDistantLight azimuth="225" elevation="45"/></feDiffuseLighting><feComposite in="l" in2="d" operator="arithmetic" k1="1" k2="0" k3="0.1" k4="0" result="m"/><feComposite in="m" in2="d" operator="in"/></filter>
</defs>
<rect width="433" height="132" fill="url(#sky)"/><rect width="433" height="132" fill="url(#skyR)"/><rect width="433" height="132" fill="url(#skyL)"/>
<g filter="url(#b6)" fill="#fff">
<ellipse cx="150" cy="84" rx="120" ry="12" opacity=".6" transform="rotate(8 150 84)"/>
<ellipse cx="60" cy="64" rx="90" ry="9" opacity=".35" transform="rotate(6 60 64)"/>
<ellipse cx="120" cy="112" rx="150" ry="6" opacity=".5"/>
</g>
<g filter="url(#b3)"><ellipse cx="100" cy="96" rx="125" ry="4.5" fill="#fff" opacity=".85" transform="rotate(6 100 96)"/><ellipse cx="40" cy="100" rx="70" ry="5" fill="#96daf4" opacity=".75" transform="rotate(3 40 100)"/><ellipse cx="60" cy="80" rx="70" ry="5" fill="#b4dcf5" opacity=".6" transform="rotate(3 60 80)"/><ellipse cx="110" cy="122" rx="130" ry="3.5" fill="#d4eef9" opacity=".9"/><ellipse cx="30" cy="115" rx="40" ry="1.8" fill="#a9c4e4" opacity=".6"/></g>
<rect x="0" y="130" width="260" height="41" fill="url(#sea)"/><rect x="0" y="130" width="200" height="41" fill="url(#seaW)"/>
<path d="M-1 128.6 L14 127 L30 125 L50 124.2 L70 125.6 L92 126.6 L120 127.4 L142 128 L142 131.6 L-1 131.4 Z" fill="#5a7a90" filter="url(#soft)"/>
<path d="M88 130.4 L110 129 L128 128.6 L142 128 L160 126.6 L176 125.4 L190 123.4 L192 133 L150 132.6 L88 132.2 Z" fill="#555e30" filter="url(#soft)"/>
<path d="M-1 130.6 H120 V132 H-1 Z" fill="#7fa4b4" opacity=".7"/>
<path d="M112 132.2 L190 132.6 L182 140 L172 150 L226 160 L226 171 L124 171 L140 160 L160 147 L174 137 L150 134 Z" fill="#e9dfcf" filter="url(#soft)"/>
<path d="M150 171 L170 158 L230 158 L230 171 Z" fill="#ddd0bc"/>
<path d="M20 160 C60 156 100 158 130 164" stroke="#d8f0f6" stroke-width="1" fill="none" opacity=".7"/><path d="M0 150 C50 147 110 150 150 154" stroke="#c4e8f2" stroke-width="1" fill="none" opacity=".6"/>
<path d="M295.9 88.1 C300.4 83.5 313.2 83.5 323.2 85.3 C333.2 87.2 348.6 98.1 355.9 99.0 C363.2 99.9 362.3 94.4 366.8 90.8 C371.4 87.2 383.2 67.1 383.2 77.1 C383.2 87.2 375.0 136.7 366.8 150.8 C358.7 164.9 340.5 167.2 334.1 161.8 C327.7 156.3 335.0 126.3 328.6 118.1 C322.3 109.9 301.3 117.6 295.9 112.6 C290.4 107.6 291.3 92.6 295.9 88.1 Z" fill="#2a1e0c"/>
<g filter="url(#leaf)"><path d="M293.1 53.9 C293.1 52.8 294.1 50.8 295.9 49.9 C297.7 48.9 302.0 49.9 304.1 48.5 C306.1 47.1 306.1 43.3 308.2 41.7 C310.2 40.1 314.5 40.5 316.3 38.9 C318.2 37.3 317.0 33.5 319.1 32.1 C321.1 30.8 325.2 31.7 328.6 30.8 C332.0 29.8 335.9 27.1 339.5 26.7 C343.2 26.2 347.5 27.1 350.5 28.0 C353.4 28.9 355.5 30.3 357.3 32.1 C359.1 33.9 360.5 36.4 361.4 38.9 C362.3 41.4 363.0 44.9 362.7 47.1 C362.5 49.4 359.3 51.0 360.0 52.6 C360.7 54.2 364.9 54.9 366.8 56.7 C368.8 58.5 371.2 61.2 371.8 63.5 C372.3 65.8 371.8 68.6 370.1 70.3 C368.4 72.0 364.7 72.8 361.4 73.6 C358.1 74.4 353.6 74.3 350.5 75.0 C347.3 75.6 345.0 76.6 342.3 77.7 C339.5 78.8 336.4 81.6 334.1 81.8 C331.8 82.0 330.7 79.3 328.6 79.1 C326.6 78.8 324.3 80.9 321.8 80.4 C319.3 80.0 316.1 77.3 313.6 76.3 C311.1 75.3 308.6 76.1 306.8 74.4 C305.0 72.7 303.6 68.7 302.7 66.2 C301.8 63.7 302.5 61.0 301.3 59.4 C300.2 57.8 297.2 57.6 295.9 56.7 C294.5 55.8 293.1 55.1 293.1 53.9 Z" fill="url(#gTree)"/><path d="M295.9 51.2 C295.4 50.3 302.0 50.1 304.1 48.5 C306.1 46.9 306.1 43.3 308.2 41.7 C310.2 40.1 314.5 40.5 316.3 38.9 C318.2 37.3 317.0 33.5 319.1 32.1 C321.1 30.8 325.2 31.7 328.6 30.8 C332.0 29.8 335.9 27.1 339.5 26.7 C343.2 26.2 347.5 27.1 350.5 28.0 C353.4 28.9 355.9 30.3 357.3 32.1 C358.7 33.9 359.8 37.3 358.7 38.9 C357.5 40.5 353.2 41.7 350.5 41.7 C347.7 41.7 345.0 38.5 342.3 38.9 C339.5 39.4 337.3 43.3 334.1 44.4 C330.9 45.5 326.4 44.6 323.2 45.8 C320.0 46.9 317.7 49.9 315.0 51.2 C312.3 52.6 310.0 53.9 306.8 53.9 C303.6 53.9 296.3 52.1 295.9 51.2 Z" fill="#7e441e" opacity=".75"/><path d="M331.4 66.2 C332.7 62.8 338.2 61.0 342.3 59.4 C346.4 57.8 351.8 56.8 355.9 56.7 C360.0 56.5 364.2 57.2 366.8 58.6 C369.5 60.0 371.3 62.8 371.8 64.9 C372.2 67.0 371.8 69.6 369.6 71.1 C367.4 72.6 362.7 72.9 358.7 73.9 C354.6 74.9 349.1 76.1 345.0 77.1 C340.9 78.1 336.4 81.7 334.1 79.9 C331.8 78.1 330.0 69.6 331.4 66.2 Z" fill="#283018" opacity=".9"/></g>
<g filter="url(#rock)">
<path d="M366.3 56.7 C366.3 54.5 369.5 52.7 372.3 51.2 C375.1 49.7 379.1 48.4 383.2 47.7 C387.3 47.0 393.2 46.9 396.9 47.1 C400.5 47.4 403.3 48.4 405.0 49.3 C406.8 50.2 407.7 50.9 407.2 52.6 C406.8 54.3 404.3 57.1 402.3 59.4 C400.4 61.7 397.8 64.2 395.5 66.2 C393.2 68.3 391.2 69.9 388.7 71.7 C386.2 73.5 382.8 75.7 380.5 77.1 C378.2 78.6 376.7 80.8 375.0 80.4 C373.3 80.1 370.8 77.7 370.4 75.0 C369.9 72.2 373.0 67.1 372.3 64.0 C371.6 61.0 366.3 58.8 366.3 56.7 Z" fill="url(#gO)"/>
<path d="M405.0 25.3 C405.4 23.5 407.0 21.7 408.3 19.8 C409.6 18.0 412.5 13.8 414.6 11.6 C416.7 9.5 421.4 5.2 424.2 3.5 C427.0 1.7 434.1 -7.4 435.6 -1.2 C437.1 5.1 437.1 43.5 435.6 50.4 C434.1 57.3 427.0 50.6 424.2 50.4 C421.4 50.2 416.7 50.0 414.6 49.0 C412.5 48.1 409.5 45.1 408.3 43.0 C407.1 41.0 406.0 35.8 405.6 33.5 C405.2 31.1 404.7 27.1 405.0 25.3 Z" fill="url(#gTopR)"/>
<path d="M300.8 79.9 C300.1 79.4 301.9 76.0 304.1 75.2 C306.2 74.5 310.8 74.6 313.6 75.2 C316.4 75.9 319.5 77.0 321.0 79.3 C322.5 81.7 322.9 87.7 322.6 89.4 C322.4 91.2 319.7 90.7 319.3 90.0 C319.0 89.2 320.6 86.6 320.4 84.8 C320.3 83.0 320.6 80.4 318.5 79.3 C316.5 78.2 311.1 78.1 308.2 78.2 C305.2 78.3 301.5 80.4 300.8 79.9 Z" fill="#b0a860"/>
<path d="M321.8 79.9 C322.9 77.9 326.5 77.5 328.6 78.0 C330.8 78.4 334.6 80.4 334.6 82.6 C334.6 84.8 330.7 90.1 328.6 91.3 C326.6 92.6 323.5 91.9 322.4 90.0 C321.2 88.1 320.8 81.9 321.8 79.9 Z" fill="#a09050"/>
<path d="M328.1 90.8 C328.3 89.4 331.3 85.1 334.1 82.6 C336.9 80.1 340.9 77.4 345.0 75.8 C349.1 74.2 354.3 73.3 358.7 73.1 C363.0 72.8 368.2 73.3 370.9 74.4 C373.7 75.6 375.3 77.6 375.0 79.9 C374.8 82.2 371.6 85.3 369.6 88.1 C367.5 90.8 365.0 93.9 362.7 96.3 C360.5 98.6 358.2 101.1 355.9 102.3 C353.6 103.4 351.4 104.3 349.1 103.1 C346.8 101.8 345.0 96.9 342.3 94.9 C339.5 92.8 335.1 91.5 332.7 90.8 C330.4 90.1 327.9 92.2 328.1 90.8 Z" fill="url(#gY)"/>
<path d="M252.2 105.0 C252.2 102.4 254.3 92.0 254.9 88.1 C255.6 84.2 257.1 75.4 257.7 71.7 C258.2 68.0 259.1 59.2 259.9 56.7 C260.6 54.1 263.3 51.0 264.5 49.9 C265.7 48.7 268.4 47.3 269.9 47.1 C271.5 47.0 276.3 48.0 278.1 48.8 C280.0 49.6 284.0 52.4 285.5 53.9 C287.0 55.5 290.2 60.3 291.2 62.1 C292.3 64.0 293.9 67.8 294.8 69.5 C295.7 71.3 297.6 76.2 299.2 77.1 C300.7 78.1 305.8 77.5 308.2 77.7 C310.5 77.9 317.6 78.0 319.1 78.8 C320.6 79.6 321.0 83.5 321.0 84.8 C321.0 86.0 321.1 89.0 319.1 89.4 C317.1 89.8 307.1 88.0 304.1 88.1 C301.0 88.2 296.0 89.0 293.1 90.2 C290.3 91.5 282.4 96.7 279.5 99.0 C276.6 101.3 270.5 107.7 268.6 109.9 C266.7 112.1 264.7 118.1 263.1 118.1 C261.5 118.1 256.2 111.4 254.9 109.9 C253.7 108.4 252.2 107.5 252.2 105.0 Z" fill="url(#gSpire)"/>
<path d="M264.5 115.9 C263.8 113.7 271.5 104.3 275.4 100.3 C279.3 96.4 284.3 94.1 287.7 92.2 C291.1 90.2 291.3 89.4 295.9 88.6 C300.4 87.8 311.0 87.2 315.0 87.5 C319.0 87.9 319.8 89.1 319.9 90.8 C320.0 92.5 317.3 94.9 315.5 97.6 C313.8 100.3 311.4 104.9 309.5 107.2 C307.6 109.4 306.8 110.2 304.1 111.0 C301.3 111.8 297.2 111.6 293.1 112.1 C289.1 112.5 284.3 113.1 279.5 113.7 C274.7 114.4 265.2 118.1 264.5 115.9 Z" fill="url(#gSlab)"/>
<path d="M310.9 105.8 C310.9 103.3 311.8 99.9 313.6 97.6 C315.4 95.3 318.6 93.3 321.8 92.2 C325.0 91.0 329.3 90.3 332.7 90.8 C336.1 91.2 339.5 92.8 342.3 94.9 C345.0 96.9 347.7 100.6 349.1 103.1 C350.5 105.6 351.1 107.6 350.5 109.9 C349.8 112.2 347.5 115.0 345.0 116.7 C342.5 118.5 339.1 120.0 335.5 120.3 C331.8 120.5 326.8 119.4 323.2 118.1 C319.5 116.8 315.7 114.7 313.6 112.6 C311.6 110.6 310.9 108.3 310.9 105.8 Z" fill="url(#gO)"/>
<path d="M338.2 150.0 C336.9 148.4 343.4 138.2 345.0 134.5 C346.6 130.7 349.9 121.7 351.8 118.1 C353.7 114.4 359.2 106.4 361.4 103.1 C363.6 99.7 368.7 92.1 370.9 89.4 C373.2 86.7 378.1 82.1 380.5 79.9 C382.9 77.6 388.9 72.6 391.4 70.3 C393.9 68.0 400.2 62.3 402.3 60.2 C404.4 58.2 407.5 53.8 409.1 52.6 C410.7 51.4 412.9 50.2 416.0 49.9 C419.1 49.5 433.3 39.5 435.6 49.3 C437.9 59.1 437.9 123.5 435.6 133.9 C433.3 144.3 420.2 137.4 416.0 138.3 C411.8 139.2 404.0 140.9 399.6 141.8 C395.1 142.7 382.9 145.1 377.8 145.9 C372.7 146.7 360.5 148.2 355.9 148.7 C351.3 149.1 339.5 151.7 338.2 150.0 Z" fill="url(#gBig)"/>
<path d="M312.8 170.5 C301.4 169.6 319.4 163.4 321.8 161.8 C324.2 160.1 333.4 155.4 336.8 154.1 C340.2 152.8 351.8 149.5 355.9 148.7 C360.0 147.8 373.4 146.1 377.8 145.4 C382.1 144.6 393.8 142.5 399.6 141.3 C405.4 140.1 432.0 130.7 435.6 133.6 C439.2 136.6 447.9 166.8 435.6 170.5 C423.3 174.2 324.2 171.4 312.8 170.5 Z" fill="url(#gBot)"/>
<path d="M168.0 171.0 C160.7 169.1 169.2 159.5 170.0 156.0 C170.8 152.5 172.0 148.2 174.0 145.0 C176.0 141.8 182.1 135.6 185.0 132.0 C187.9 128.4 192.8 120.9 196.0 118.0 C199.2 115.1 206.6 111.6 209.0 110.0 C211.4 108.4 212.2 106.8 214.0 105.8 C215.8 104.8 220.0 102.9 222.2 102.3 C224.4 101.6 228.0 101.1 230.4 101.2 C232.7 101.3 237.7 102.3 239.9 103.1 C242.1 103.9 245.7 106.1 246.8 107.2 C247.8 108.3 248.7 109.8 248.1 111.3 C247.6 112.7 244.3 116.2 242.7 118.1 C241.0 120.0 237.7 123.5 235.8 125.7 C234.0 127.9 230.3 131.1 229.0 134.5 C227.7 137.8 226.8 146.1 226.3 150.8 C225.7 155.6 232.7 167.3 224.9 169.9 C217.1 172.6 175.3 172.9 168.0 171.0 Z" fill="url(#gFar)"/>
<path d="M235.3 126.3 C235.3 125.3 239.0 121.2 241.3 118.1 C243.6 115.0 246.7 109.9 248.9 107.7 C251.2 105.5 253.3 104.6 254.9 105.0 C256.6 105.4 257.8 107.7 259.0 109.9 C260.3 112.1 262.8 115.4 262.6 118.1 C262.4 120.8 259.0 123.5 257.7 126.3 C256.3 129.0 256.0 134.6 254.4 134.5 C252.8 134.4 250.3 127.5 248.1 125.7 C245.9 124.0 243.4 124.0 241.3 124.1 C239.2 124.2 235.3 127.3 235.3 126.3 Z" fill="#f08c10"/>
<path d="M252.2 169.9 C243.9 167.4 252.4 155.6 252.8 150.8 C253.1 146.1 253.9 138.3 254.9 134.5 C256.0 130.6 258.6 124.7 260.4 122.2 C262.2 119.7 265.9 117.2 268.6 115.9 C271.3 114.6 277.2 113.2 280.9 112.6 C284.5 112.0 292.2 111.6 295.9 111.3 C299.5 111.0 304.9 110.3 308.2 110.4 C311.4 110.6 317.3 111.6 320.4 112.6 C323.5 113.6 328.7 116.3 331.4 118.1 C334.0 119.9 338.6 124.1 340.1 126.3 C341.6 128.5 342.7 131.9 342.8 134.5 C342.9 137.0 342.1 142.5 340.9 145.4 C339.7 148.3 336.5 153.7 334.1 156.3 C331.7 158.8 325.7 162.7 323.2 164.5 C320.6 166.3 324.4 169.2 315.0 169.9 C305.5 170.7 260.5 172.5 252.2 169.9 Z" fill="url(#gMain)"/>
<path d="M224.9 169.9 C221.4 167.4 225.8 155.4 226.3 150.8 C226.7 146.3 227.1 138.9 228.2 135.8 C229.3 132.7 232.7 129.2 234.5 127.6 C236.2 126.1 239.5 124.3 241.3 124.1 C243.1 123.8 246.7 124.7 248.1 125.7 C249.6 126.7 251.4 129.8 252.2 131.7 C253.0 133.6 254.3 137.4 254.4 139.9 C254.5 142.5 253.3 146.8 253.0 150.8 C252.8 154.8 256.2 167.4 252.5 169.9 C248.7 172.5 228.4 172.5 224.9 169.9 Z" fill="url(#gNarrow)"/>
</g>
<path d="M370.9 89.4 C373.2 86.7 377.1 83.1 380.5 79.9 C383.9 76.7 387.8 73.6 391.4 70.3 C395.0 67.1 399.4 63.2 402.3 60.2 C405.3 57.3 406.9 54.3 409.1 52.6 C411.4 50.9 411.6 50.4 416.0 49.9 C420.4 49.3 432.3 46.0 435.6 49.3 C438.9 52.6 438.0 65.7 435.6 69.5 C433.3 73.3 426.5 70.5 421.4 72.2 C416.3 74.0 410.1 76.6 405.0 79.9 C400.0 83.2 395.5 88.1 391.4 92.2 C387.3 96.3 383.4 102.2 380.5 104.4 C377.5 106.7 375.9 107.2 373.7 105.8 C371.4 104.4 367.3 99.0 366.8 96.3 C366.4 93.5 368.7 92.2 370.9 89.4 Z" fill="#7a5230" opacity=".55" filter="url(#b1)"/>
<path d="M350.5 126.3 C352.1 122.0 356.8 119.9 361.4 118.1 C365.9 116.3 372.8 114.9 377.8 115.4 C382.8 115.8 388.7 118.1 391.4 120.8 C394.1 123.5 395.5 128.3 394.1 131.7 C392.8 135.1 387.8 139.0 383.2 141.3 C378.7 143.6 372.1 144.9 366.8 145.4 C361.6 145.8 354.6 147.2 351.8 144.0 C349.1 140.8 348.9 130.6 350.5 126.3 Z" fill="#f2d490" opacity=".6" filter="url(#b2)"/>
<path d="M269.9 59.4 C270.4 57.8 273.4 56.0 275.4 56.7 C277.5 57.4 280.9 61.2 282.2 63.5 C283.6 65.8 284.3 69.3 283.6 70.3 C282.9 71.3 280.0 70.2 278.1 69.5 C276.3 68.8 274.0 67.9 272.7 66.2 C271.3 64.5 269.5 61.0 269.9 59.4 Z" fill="#24241a" opacity=".9" filter="url(#b1)"/>
<path d="M196.0 118.0 L209.0 110.0 L228.0 103.0 L228.0 112.0 L220.0 124.0 L214.0 140.0 L206.0 152.0 L197.0 148.0 L190.0 140.0 Z" fill="#e25a14" opacity=".8" filter="url(#b1)"/>
<path d="M217.0 105.0 L228.0 100.5 L241.0 102.5 L247.0 109.0 L240.0 111.0 L228.0 107.0 L220.0 109.0 Z" fill="#6e5a44" opacity=".75" filter="url(#b1)"/>
<g fill="none" stroke="#3a342c" stroke-width="2.2" opacity=".5" filter="url(#b1)" stroke-linecap="round"><path d="M270 100 L263 134"/><path d="M281 97 L273 130"/><path d="M294 92 L287 116"/><path d="M306 90 L300 108"/></g>
<path d="M172.0 152.0 L200.0 150.0 L226.0 156.0 L226.0 169.0 L168.0 169.0 Z" fill="#e8c884" opacity=".55" filter="url(#b2)"/>
<path d="M254.9 168.6 L257.1 139.9 L264.5 123.5 L272.7 120.8 L274.0 139.9 L272.7 168.6 Z" fill="#f6d466" opacity=".8" filter="url(#b1)"/>
<path d="M229.0 168.6 L230.4 145.4 L241.3 139.9 L249.5 150.8 L249.5 168.6 Z" fill="#f8e6b0" opacity=".5" filter="url(#b1)"/>
<path d="M283.6 52.6 C285.3 51.9 289.4 59.3 291.2 62.1 C293.1 65.0 293.5 66.9 294.8 69.5 C296.1 72.1 299.0 74.6 299.2 77.7 C299.3 80.8 297.9 85.5 295.9 88.1 C293.9 90.6 289.3 94.3 287.1 93.0 C285.0 91.6 283.8 84.3 282.8 79.9 C281.8 75.4 281.0 70.8 281.1 66.2 C281.3 61.7 281.9 53.3 283.6 52.6 Z" fill="#2a2620" opacity=".45" filter="url(#b1)"/>
<g filter="url(#b1)" fill="#1e1608"><ellipse cx="332" cy="119.5" rx="17" ry="3.2" opacity=".6"/><ellipse cx="355" cy="101" rx="14" ry="2.6" opacity=".5" transform="rotate(-25 355 101)"/><ellipse cx="390" cy="74" rx="12" ry="2.4" opacity=".45" transform="rotate(-35 390 74)"/></g>
<g fill="none" stroke="#2a1a08" stroke-width="1.6" opacity=".6" filter="url(#soft)"><path d="M338.2 150.0 C333.9 157.5 342.7 139.8 345.0 134.5 C347.3 129.1 349.1 123.3 351.8 118.1 C354.6 112.9 358.2 107.9 361.4 103.1 C364.6 98.3 374.8 81.6 370.9 89.4"/><path d="M252.2 169.9 C249.6 175.8 252.3 156.8 252.8 150.8 C253.2 144.9 253.7 139.2 254.9 134.5 C256.2 129.7 258.1 125.3 260.4 122.2 C262.7 119.1 269.9 107.9 268.6 115.9"/><path d="M312.8 170.5 C293.8 175.2 317.8 164.5 321.8 161.8 C325.8 159.0 331.1 156.3 336.8 154.1 C342.5 151.9 349.1 150.1 355.9 148.7 C362.7 147.2 370.5 146.6 377.8 145.4 C385.0 144.2 389.9 143.2 399.6 141.3 C409.2 139.3 450.1 128.8 435.6 133.6"/></g>
<g filter="url(#rock)"><path d="M151 160 L155 154 L162 152 L166 156 L164 162 L156 164 Z" fill="#a8954c"/><path d="M164 154 L170 151 L172 158 L166 160 Z" fill="#c0a458"/><path d="M152 166 L158 163 L164 166 L160 169 Z" fill="#b89a50"/><path d="M62.0 172.0 C55.0 170.5 68.0 165.3 72.0 163.0 C76.0 160.7 80.8 158.5 86.0 158.0 C91.2 157.5 98.3 157.7 103.0 160.0 C107.7 162.3 120.8 170.0 114.0 172.0 C107.2 174.0 69.0 173.5 62.0 172.0 Z" fill="#c4a466"/></g>
<path d="M64 171 L72 166 L90 165 L104 167 L113 171 Z" fill="#6a4c20" opacity=".7" filter="url(#soft)"/>
</svg>
<!--PHOTO_END-->


  
  <div class="st" style="left:24px">第 1 页，共 1 页</div>
  <div class="st" style="left:130px">130 个字</div>
  <svg style="left:198px;top:559px" width="18" height="14" viewBox="0 0 18 14" fill="none" stroke="#e4e4e4" stroke-width="1.2" stroke-linejoin="round"><path d="M0.8 1 H5.4 C6.4 1 7 1.6 7 2.6 V12.6 C7 11.8 6.4 11.2 5.4 11.2 H0.8 Z"/><path d="M13.2 4.6 V11.2 H8.6 C7.6 11.2 7 11.8 7 12.6 V2.6 C7 1.6 7.6 1 8.6 1 H11"/><path d="M16 0.6 L17.4 2 L12 7.6 L10.2 8 L10.6 6.2 Z" fill="#e4e4e4" stroke="none"/></svg>
  <div class="st" style="left:233px">英语 (英国)</div>
  <svg style="left:511px;top:560px" width="16" height="12" viewBox="0 0 16 12" fill="none" stroke="#e4e4e4" stroke-width="1.3"><rect x="0.7" y="0.7" width="14.6" height="10.6" rx="1.4"/><path d="M3.4 5 V3.4 H5.4 M10.6 3.4 H12.6 V5 M12.6 7 V8.6 H10.6 M5.4 8.6 H3.4 V7" stroke-width="1.1"/></svg>
  <div class="st" style="left:533px">专注</div>
  <div class="abs" style="left:567px;top:555px;width:37px;height:22px;background:#5c5c5c"></div>
  <svg style="left:577px;top:559px" width="15" height="14" viewBox="0 0 15 14" fill="none" stroke="#f0f0f0" stroke-width="1.1"><rect x="0.6" y="0.6" width="13.8" height="12.8" rx="1"/><path d="M3 3.6 H12 M3 5.8 H12 M3 8 H12 M3 10.2 H12"/></svg>
  <svg style="left:613px;top:559px" width="17" height="15" viewBox="0 0 17 15" fill="none" stroke="#e4e4e4" stroke-width="1.1"><path d="M8 11.6 H0.6 V0.6 H11.4 V6"/><path d="M2.6 3.2 H9.4 M2.6 5.4 H9.4 M2.6 7.6 H7"/><circle cx="12" cy="10.4" r="4" fill="#e4e4e4" stroke="none"/><path d="M9.6 9 C11 10 11.6 8.6 13 9.6 C14 10.4 12.6 11.6 13.4 12.6" stroke="#444" stroke-width="0.9"/></svg>
  <svg style="left:650px;top:560px" width="15" height="12" viewBox="0 0 15 12" fill="none" stroke="#e4e4e4" stroke-width="1.2"><path d="M3.4 1 H10 M6.4 4.4 H14.4 M6.4 7.6 H14.4 M3.4 11 H10"/><path d="M0.6 0.4 H2 M3.6 3.8 H5 M3.6 7 H5 M0.6 10.4 H2" stroke-width="1.4"/></svg>
  <svg style="left:684px;top:560px" width="15" height="12" viewBox="0 0 15 12" fill="none" stroke="#e4e4e4" stroke-width="1.2"><path d="M0.4 1 H14.6 M0.4 4.4 H14.6 M0.4 7.6 H14.6 M0.4 11 H10"/></svg>
  <div class="abs" style="left:718px;top:564.5px;width:9px;height:2px;background:#f0f0f0"></div>
  <div class="abs" style="left:734px;top:563.5px;width:100px;height:4px;border-radius:2px;background:#808080"></div>
  <div class="abs" style="left:775px;top:557.5px;width:16px;height:16px;border-radius:50%;background:#b8b8b8;box-shadow:0 0.5px 1px rgba(0,0,0,.5)"></div>
  <div class="abs" style="left:840px;top:564.5px;width:9px;height:2px;background:#f0f0f0"></div>
  <div class="abs" style="left:843.5px;top:561px;width:2px;height:9px;background:#f0f0f0"></div>
  <div class="st" style="left:866px;font-size:12.5px">100%</div>

</div>
</body>
</html>
